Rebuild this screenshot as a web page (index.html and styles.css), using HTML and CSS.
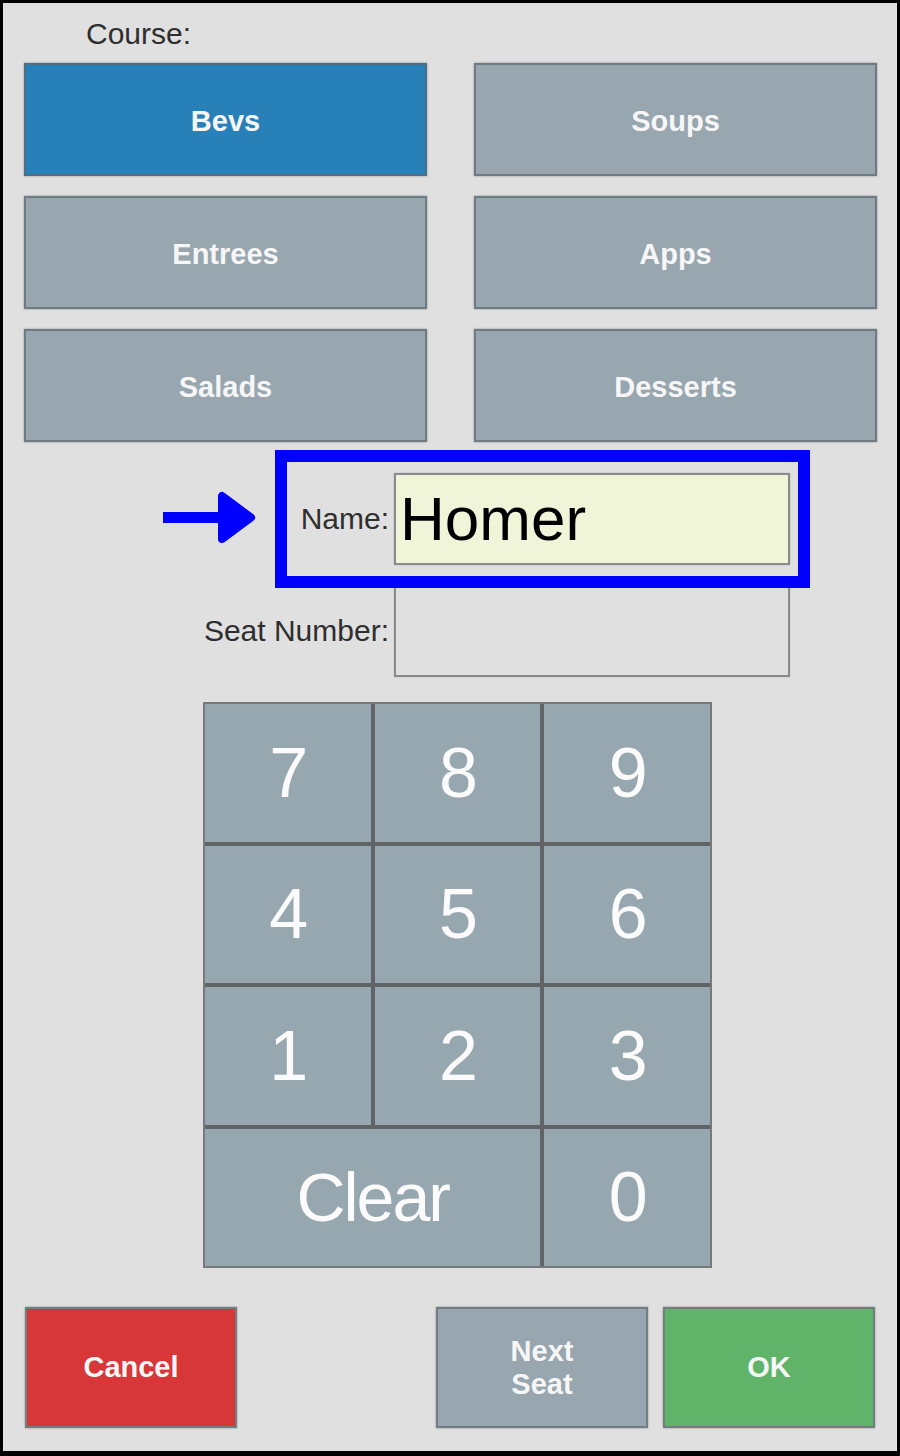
FILE: index.html
```html
<!DOCTYPE html>
<html>
<head>
<meta charset="utf-8">
<link rel="stylesheet" href="styles.css">
</head>
<body>
<div class="frame">
  <div class="course-label">Course:</div>
  <div class="courses">
    <div class="btn btn-blue">Bevs</div>
    <div class="btn">Soups</div>
    <div class="btn">Entrees</div>
    <div class="btn">Apps</div>
    <div class="btn">Salads</div>
    <div class="btn">Desserts</div>
  </div>
  <div class="form">
    <div class="label">Name:</div>
    <div class="input input-name">Homer</div>
    <div class="label">Seat Number:</div>
    <div class="input"></div>
  </div>
  <div class="keypad">
    <div class="key">7</div>
    <div class="key">8</div>
    <div class="key">9</div>
    <div class="key">4</div>
    <div class="key">5</div>
    <div class="key">6</div>
    <div class="key">1</div>
    <div class="key">2</div>
    <div class="key">3</div>
    <div class="key key-wide">Clear</div>
    <div class="key">0</div>
  </div>
  <div class="actions">
    <div class="act act-cancel">Cancel</div>
    <div class="act-right">
      <div class="act act-gray">Next<br>Seat</div>
      <div class="act act-ok">OK</div>
    </div>
  </div>
  <div class="highlight"></div>
  <svg class="arrow" width="100" height="58" viewBox="0 0 100 58">
    <rect x="3" y="23" width="62" height="11" fill="#0000ff"/>
    <polygon points="62,7 62,50 91,28.5" fill="#0000ff" stroke="#0000ff" stroke-width="8" stroke-linejoin="round"/>
  </svg>
</div>
</body>
</html>
```
FILE: styles.css
```css
html, body {
  margin: 0;
  padding: 0;
}
body {
  font-family: "Liberation Sans", Arial, sans-serif;
}
.frame {
  position: relative;
  width: 900px;
  height: 1456px;
  box-sizing: border-box;
  border: 3px solid #000;
  border-bottom-width: 5px;
  background: #e0e0e0;
  overflow: hidden;
}
.course-label {
  height: 46px;
  padding-top: 14px;
  padding-left: 83px;
  font-size: 30px;
  line-height: 34px;
  color: #2e2e2e;
}
.courses {
  margin-left: 21px;
  display: grid;
  grid-template-columns: 403px 403px;
  grid-auto-rows: 113px;
  column-gap: 47px;
  row-gap: 20px;
}
.btn {
  box-sizing: border-box;
  border: 2px solid #6f7b82;
  background: #97a6af;
  box-shadow: 0 0 2px rgba(0, 0, 0, 0.35);
  color: #f6f6f6;
  font-weight: bold;
  font-size: 29px;
  padding-top: 4px;
  display: flex;
  align-items: center;
  justify-content: center;
}
.btn-blue {
  background: #2880b9;
  border-color: #4b6f87;
}
.form {
  margin-top: 31px;
  margin-left: 200px;
  width: 587px;
  display: grid;
  grid-template-columns: 1fr 396px;
  grid-auto-rows: 92px;
  row-gap: 20px;
}
.label {
  text-align: right;
  padding-right: 5px;
  font-size: 30px;
  color: #2e2e2e;
  display: flex;
  align-items: center;
  justify-content: flex-end;
}
.input {
  box-sizing: border-box;
  border: 2px solid #8a8a8a;
  box-shadow: 0 0 1px rgba(0, 0, 0, 0.3);
  background: #e0e0e0;
}
.input-name {
  background: #f0f4d9;
  font-size: 62px;
  color: #000;
  padding-left: 4px;
  display: flex;
  align-items: center;
  line-height: 1;
}
.keypad {
  margin-top: 25px;
  margin-left: 200px;
  width: 509px;
  height: 566px;
  box-sizing: border-box;
  border: 2px solid #77797b;
  background: #606467;
  display: grid;
  grid-template-columns: repeat(3, 1fr);
  grid-template-rows: repeat(4, 1fr);
  gap: 4px;
}
.key {
  background: #97a7b0;
  color: #fbfbfb;
  font-size: 70px;
  letter-spacing: -2px;
  display: flex;
  align-items: center;
  justify-content: center;
}
.key-wide {
  grid-column: span 2;
  font-size: 68px;
}
.actions {
  margin-top: 39px;
  margin-left: 22px;
  width: 850px;
  display: flex;
  justify-content: space-between;
}
.act-right {
  display: flex;
  gap: 15px;
}
.act {
  width: 212px;
  height: 121px;
  box-sizing: border-box;
  border: 2px solid #737c80;
  box-shadow: 0 0 2px rgba(0, 0, 0, 0.35);
  color: #f6f6f6;
  font-weight: bold;
  font-size: 29px;
  line-height: 33px;
  display: flex;
  align-items: center;
  justify-content: center;
  text-align: center;
}
.act-cancel {
  background: #d73739;
}
.act-gray {
  background: #97a6af;
}
.act-ok {
  background: #5fb46a;
}
.highlight {
  position: absolute;
  left: 272px;
  top: 447px;
  width: 535px;
  height: 138px;
  box-sizing: border-box;
  border: 12px solid #0000ff;
}
.arrow {
  position: absolute;
  left: 157px;
  top: 486px;
}
```
